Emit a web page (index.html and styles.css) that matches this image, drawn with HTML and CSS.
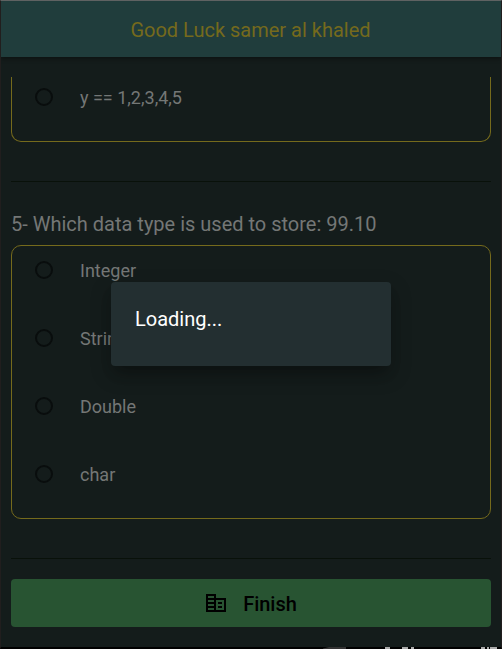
FILE: index.html
```
<!DOCTYPE html>
<html lang="en">
<head>
<meta charset="utf-8">
<title>Quiz</title>
<link rel="stylesheet" href="styles.css">
</head>
<body>
<div class="app">
  <header class="bar"><span>Good Luck samer al khaled</span></header>
  <main class="content">
    <section class="answers answers-cut">
      <div class="option"><i class="radio"></i><span>y == 1,2,3,4,5</span></div>
    </section>
    <hr class="divider">
    <h2 class="question"><span>5- Which data type is used to store: 99.10</span></h2>
    <section class="answers">
      <div class="option"><i class="radio"></i><span>Integer</span></div>
      <div class="option"><i class="radio"></i><span>String</span></div>
      <div class="option"><i class="radio"></i><span>Double</span></div>
      <div class="option"><i class="radio"></i><span>char</span></div>
    </section>
    <hr class="divider">
    <button class="finish">
      <svg width="24" height="24" viewBox="0 0 24 24"><path d="M12 7V3H2v18h20V7H12zM10 19H4v-2h6v2zm0-4H4v-2h6v2zm0-4H4V9h6v2zm0-4H4V5h6v2zm10 12h-8V9h8v10zm-2-8h-4v2h4v-2zm0 4h-4v2h4v-2z"/></svg>
      <span>Finish</span>
    </button>
  </main>
  <div class="dialog"><span>Loading...</span></div>
</div>
<svg class="edge" width="182" height="4" viewBox="0 0 182 4">
  <path fill="#333" d="M3 3.5l6-1.5h17v2H3z"/>
  <path fill="#aaa" d="M65 2h5v2h-5zM82 2h6v2h-6zM91 2h3v2h-3zM161 2h4v2h-4zM167 2h2v2h-2zM170 2h7v2h-7z"/>
</svg>
</body>
</html>
```
FILE: styles.css
```
* { box-sizing: border-box; }
body { margin: 0; position: relative; background: #000; font-family: Roboto, sans-serif; }
.app {
  position: relative;
  width: 502px;
  height: 649px;
  overflow: hidden;
  background: #141c1b;
  border: 1px solid #211e1e;
  border-top-color: #5f6262;
  border-bottom: 2px solid #000;
}
.bar {
  height: 56px;
  display: flex;
  align-items: center;
  justify-content: center;
  background: #203d3c;
  color: #756a1c;
  font-size: 20px;
  line-height: 24px;
  padding: 2px 1px 0 0;
  box-shadow: 0 2px 4px rgba(0, 0, 0, .35);
}
.content { padding: 20px 10px 0; }
.answers {
  height: 274px;
  border: 1px solid #756a1c;
  border-radius: 10px;
}
.answers-cut {
  height: 65px;
  border-top: 0;
  border-radius: 0 0 10px 10px;
}
.option {
  height: 68px;
  display: flex;
  align-items: flex-start;
  padding: 15px 0 0 23px;
  color: #747776;
  font-size: 18px;
  line-height: 20px;
}
.answers-cut .option { padding-top: 11px; }
.radio {
  width: 18px;
  height: 18px;
  border: 2px solid #090d0d;
  border-radius: 50%;
  margin-right: 27px;
}
.divider {
  margin: 39px 0 0;
  height: 1px;
  border: 0;
  background: #09110a;
}
.question {
  margin: 0;
  height: 63px;
  padding-top: 30px;
  color: #747776;
  font-size: 20px;
  font-weight: 400;
  line-height: 24px;
}
.finish {
  width: 100%;
  height: 48px;
  margin-top: 20px;
  padding: 0 1px 0 0;
  border: 0;
  border-radius: 4px;
  display: flex;
  align-items: center;
  justify-content: center;
  gap: 15px;
  background: #285432;
  color: #000;
  font: 500 20px/24px Roboto, sans-serif;
}
.finish span { padding-top: 2px; }
.dialog {
  position: absolute;
  left: 110px;
  top: 281px;
  width: 280px;
  height: 84px;
  padding: 25px 24px;
  border-radius: 4px;
  background: #232f31;
  color: #fff;
  font-size: 20px;
  line-height: 24px;
  box-shadow: 0 10px 14px -6px rgba(0, 0, 0, .25), 0 8px 20px 2px rgba(0, 0, 0, .2);
}
.edge {
  position: absolute;
  left: 320px;
  bottom: 0;
}
```
